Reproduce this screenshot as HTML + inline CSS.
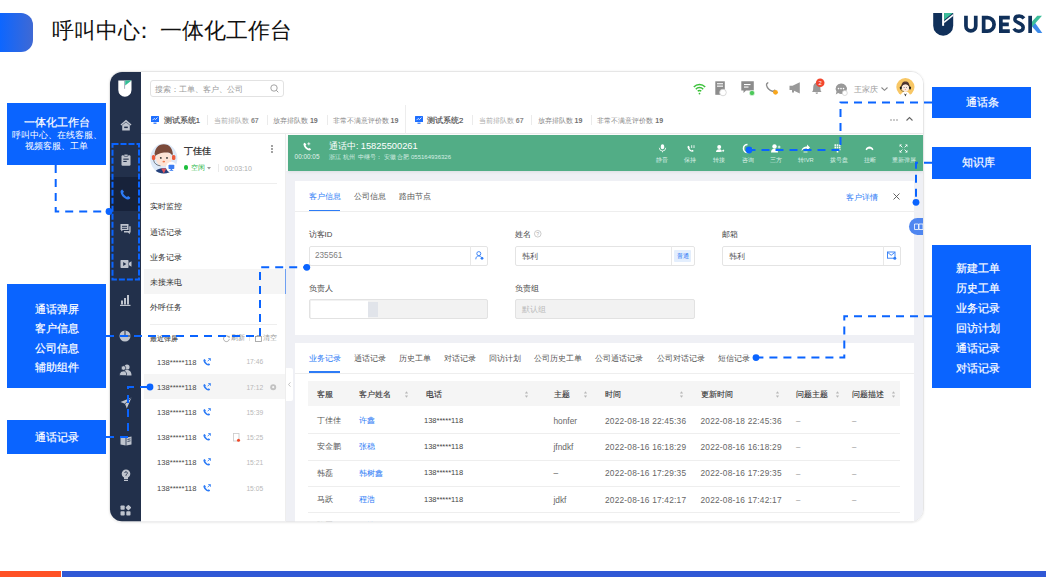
<!DOCTYPE html>
<html><head><meta charset="utf-8">
<style>
*{margin:0;padding:0;box-sizing:border-box}
html,body{width:1046px;height:577px;overflow:hidden;background:#fff;font-family:"Liberation Sans",sans-serif;color:#333}
.a{position:absolute}
.t{position:absolute;white-space:nowrap}
svg{overflow:visible}
</style></head><body>

<div class="a" style="left:0px;top:13.3px;width:33.00px;height:38.50px;border-radius:0 12px 12px 0;background:linear-gradient(90deg,#0D66FF,#3F69D4)"></div>
<div class="t" style="left:51.6px;top:19.5px;font-size:22px;line-height:22px;color:#111">呼叫中心<span style="position:relative;left:-6.5px">：</span><span style="position:relative;left:-1.2px">一体化工作台</span></div>
<svg class="a" style="left:932px;top:12px" width="22" height="25" viewBox="0 0 22 25"><path d="M1.2 1 H21.2 V13.8 A10 10 0 0 1 1.2 13.8 Z" fill="#10305A"/><rect x="10.1" y="1" width="2" height="12.8" fill="#fff"/><path d="M12.1 9.2 L21.2 1.9 V3.9 L12.1 11.2 Z" fill="#fff"/><path d="M12.1 1 H20.8 L12.1 8 Z" fill="#3DBE9A"/></svg>
<svg class="a" style="left:960px;top:10px" width="86" height="28" viewBox="0 0 86 28"><g stroke="#10305A" stroke-width="3.7" fill="none"><path d="M5.95 5.8 V16 A4.9 4.9 0 0 0 15.75 16 V5.8"/><path d="M23.65 7.65 H27.5 A6.6 6.75 0 0 1 27.5 21.15 H23.65 Z" stroke-linejoin="miter"/><path d="M49.8 7.65 H40.85 V21.15 H49.8 M40.85 14.4 H48.8" stroke-linejoin="miter"/></g><path d="M64 8.3 C62.6 6.6 60.9 5.9 59.2 5.9 C56.5 5.9 54.9 7.4 54.9 9.5 C54.9 13.2 63.2 12.6 63.2 17.4 C63.2 19.8 61.4 21.3 58.9 21.3 C56.8 21.3 55 20.4 53.8 18.6" stroke="#10305A" stroke-width="3.5" fill="none"/><rect x="68.3" y="5.8" width="3.7" height="17.2" fill="#10305A"/><path d="M72 16.5 L74.8 12.5 L82.3 23 H77.8 Z" fill="#3D8BEA"/><path d="M72 11.5 L77.3 5.8 H82 L72 17 Z" fill="#3DBE9A"/></svg>
<div class="a" style="left:0px;top:571px;width:61.00px;height:6.00px;background:#FF5226"></div>
<div class="a" style="left:62px;top:571px;width:984.00px;height:6.00px;background:#3058D5"></div>
<div class="a" style="left:109px;top:71px;width:815px;height:451.2px;border-radius:13px;border:1px solid #E6E6E6;box-shadow:0 0.5px 2px rgba(0,0,0,0.08)"></div>
<div class="a" style="left:0;top:0;width:1046px;height:577px;clip-path:inset(72px 123px 55.8px 110px round 12px)">
<div class="a" style="left:110px;top:72px;width:813.00px;height:450.00px;background:#EFF0F5"></div>
<div class="a" style="left:110px;top:72px;width:31.00px;height:450.00px;background:#22304B"></div>
<div class="a" style="left:110px;top:177px;width:31.00px;height:34.00px;background:#17223A"></div>
<div class="a" style="left:141px;top:72px;width:782.00px;height:34.00px;background:#fff;border-bottom:1px solid #EBEBEB"></div>
<div class="a" style="left:141px;top:105px;width:782.00px;height:28.50px;background:#fff;border-bottom:1px solid #EBEBEB"></div>
<div class="a" style="left:141px;top:133.5px;width:145.00px;height:388.50px;background:#fff;border-right:1px solid #EEEEEE"></div>
<div class="a" style="left:286px;top:133.5px;width:637.00px;height:37.50px;background:#fff"></div>
<div class="a" style="left:288px;top:135px;width:635.00px;height:36.00px;background:#52AD86;box-shadow:0 1px 3px rgba(0,0,0,0.08)"></div>
<div class="a" style="left:295px;top:181px;width:619.00px;height:154.30px;background:#fff"></div>
<div class="a" style="left:295px;top:343.3px;width:619.00px;height:186.70px;background:#fff"></div>
<svg class="a" style="left:118px;top:80px" width="14" height="17" viewBox="0 0 14 17"><path d="M0.3 0.5 H13.5 V10.1 A6.6 6.6 0 0 1 0.3 10.1 Z" fill="#fff"/><path d="M6.6 0.5 V8.8" stroke="#9AA3B5" stroke-width="0.9"/><path d="M7.2 0.5 H13.5 L7.2 5.5 Z" fill="#33BE96"/></svg>
<svg class="a" style="left:119.5px;top:118.5px" width="12" height="12" viewBox="0 0 12 12"><path d="M6 0.8 L11.5 5.6 L10.6 6.6 L6 2.7 L1.4 6.6 L0.5 5.6 Z" fill="#BFC4CE"/><path d="M2.2 6.3 L6 3.2 L9.8 6.3 V11.4 H2.2 Z" fill="#BFC4CE"/><rect x="4.2" y="7.6" width="3.6" height="1.5" fill="#22304B"/></svg>
<svg class="a" style="left:120.5px;top:153.5px" width="10" height="12" viewBox="0 0 10 12"><rect x="0.5" y="1.2" width="9" height="10.5" rx="1.2" fill="#BFC4CE"/><rect x="3" y="0.2" width="4" height="2.2" rx="0.8" fill="#BFC4CE" stroke="#22304B" stroke-width="0.6"/><rect x="2.3" y="4.6" width="5.4" height="1.1" fill="#22304B"/><rect x="2.3" y="6.9" width="3.4" height="1.1" fill="#22304B"/></svg>
<svg class="a" style="left:120px;top:189px" width="11" height="11" viewBox="0 0 11 11"><path d="M2.2 0.6 C1.2 1 0.4 1.9 0.6 3.2 C1.2 6.6 4.4 9.9 7.8 10.4 C9 10.6 9.9 9.8 10.4 8.8 L8.2 7 L6.9 8 C5.3 7.3 3.7 5.7 3 4.1 L4 2.8 Z" fill="#2C7BF6"/></svg>
<svg class="a" style="left:120px;top:222.5px" width="11" height="12" viewBox="0 0 11 12"><path d="M0.5 1 H8.5 V7 H3 L1.2 8.6 V7 H0.5 Z" fill="#BFC4CE"/><path d="M9.3 3.2 H10.6 V9.6 H9.8 V11.2 L8 9.6 H4 V8 H9.3 Z" fill="#BFC4CE"/><rect x="2" y="2.8" width="5" height="1" fill="#22304B"/><rect x="2" y="4.8" width="5" height="1" fill="#22304B"/></svg>
<svg class="a" style="left:119.5px;top:259px" width="12" height="10" viewBox="0 0 12 10"><rect x="0.5" y="1" width="8" height="8" rx="0.8" fill="#BFC4CE"/><path d="M9 3.8 L11.5 2.3 V7.7 L9 6.2 Z" fill="#BFC4CE"/><path d="M3.2 3 L6.3 5 L3.2 7 Z" fill="#22304B"/></svg>
<svg class="a" style="left:120px;top:293.5px" width="11" height="12" viewBox="0 0 11 12"><rect x="1" y="6.5" width="2" height="4" fill="#BFC4CE"/><rect x="4" y="4" width="2" height="6.5" fill="#BFC4CE"/><rect x="7" y="1" width="2" height="9.5" fill="#BFC4CE"/><rect x="0" y="10.8" width="10.5" height="1.2" fill="#BFC4CE"/></svg>
<svg class="a" style="left:119.2px;top:330.2px" width="12" height="12" viewBox="0 0 12 12"><circle cx="6" cy="6" r="5.5" fill="#BFC4CE"/><path d="M6 0.5 V6 H11.5" stroke="#22304B" stroke-width="1" fill="none"/></svg>
<svg class="a" style="left:118.5px;top:364.3px" width="13" height="12" viewBox="0 0 13 12"><circle cx="8" cy="3" r="2.6" fill="#BFC4CE"/><path d="M3.5 11.5 C3.5 7.5 5.5 6 8 6 C10.5 6 12.5 7.5 12.5 11.5 Z" fill="#BFC4CE"/><circle cx="4.5" cy="4" r="2.3" fill="#BFC4CE" stroke="#22304B" stroke-width="0.7"/><path d="M0.5 11.5 C0.5 8.3 2 7 4.5 7 C6 7 7 8 7.5 9 V11.5 Z" fill="#BFC4CE" stroke="#22304B" stroke-width="0.7"/></svg>
<svg class="a" style="left:119.5px;top:397px" width="12" height="12" viewBox="0 0 12 12"><path d="M11.5 0.5 L0.5 5 L5 6.8 L6.8 11.5 Z" fill="#BFC4CE"/><path d="M11.5 0.5 L5 6.8" stroke="#22304B" stroke-width="0.8"/></svg>
<svg class="a" style="left:119.5px;top:434.5px" width="12" height="11" viewBox="0 0 12 11"><path d="M0.5 1.5 L5.6 2.6 V10.5 L0.5 9.5 Z" fill="#BFC4CE"/><path d="M6.4 2.6 L11.5 1.5 V9.5 L6.4 10.5 Z" fill="#BFC4CE"/><path d="M7.5 4.5 L10.5 3.8 M7.5 6.5 L10.5 5.8" stroke="#22304B" stroke-width="0.8"/></svg>
<svg class="a" style="left:120.5px;top:469px" width="10" height="13" viewBox="0 0 10 13"><circle cx="5" cy="4.8" r="4.3" fill="#BFC4CE"/><rect x="3" y="8" width="4" height="2" fill="#BFC4CE"/><rect x="3" y="10.8" width="4" height="1.2" fill="#BFC4CE"/><path d="M3.7 4 A1.3 1.3 0 1 1 5.6 5.2 L5 6 V6.8" stroke="#22304B" stroke-width="0.9" fill="none"/></svg>
<svg class="a" style="left:120px;top:505px" width="11" height="11" viewBox="0 0 11 11"><rect x="0.5" y="0.5" width="4.2" height="4.2" rx="0.8" fill="#BFC4CE"/><rect x="6.3" y="0.5" width="4.2" height="4.2" rx="0.8" fill="#BFC4CE" transform="rotate(45 8.4 2.6)"/><rect x="0.5" y="6.3" width="4.2" height="4.2" rx="0.8" fill="#BFC4CE"/><rect x="6.3" y="6.3" width="4.2" height="4.2" rx="0.8" fill="#BFC4CE"/></svg>
<div class="a" style="left:150px;top:80px;width:134.00px;height:17.30px;border:1px solid #E2E2E2;border-radius:3px;background:#fff"></div>
<div class="t" style="left:154.5px;top:85.55px;font-size:7.9px;line-height:7.9px;color:#9A9A9A;font-weight:normal;">搜索：工单、客户、公司</div>
<svg class="a" style="left:270px;top:84px" width="9" height="9" viewBox="0 0 9 9"><circle cx="4" cy="4" r="3.2" stroke="#9A9A9A" stroke-width="0.9" fill="none"/><path d="M6.3 6.3 L8.3 8.3" stroke="#9A9A9A" stroke-width="1"/></svg>
<svg class="a" style="left:692.5px;top:82.5px" width="13" height="11.5" viewBox="0 0 13 11.5"><path d="M0.8 4 A8 8 0 0 1 12.2 4" stroke="#3CC13B" stroke-width="1.5" fill="none"/><path d="M2.8 6.2 A5 5 0 0 1 10.2 6.2" stroke="#3CC13B" stroke-width="1.5" fill="none"/><path d="M4.8 8.3 A2.3 2.3 0 0 1 8.2 8.3" stroke="#3CC13B" stroke-width="1.5" fill="none"/><circle cx="6.5" cy="10.6" r="0.9" fill="#3CC13B"/></svg>
<svg class="a" style="left:715px;top:80.8px" width="12" height="14" viewBox="0 0 12 14"><rect x="0.3" y="0.3" width="9.5" height="13.5" fill="#8C8C8C"/><rect x="2" y="2.2" width="6" height="1.1" fill="#fff"/><rect x="2" y="4.6" width="6" height="1.1" fill="#fff"/><circle cx="8" cy="11.5" r="3.3" fill="#fff" stroke="#CFCFCF" stroke-width="0.8"/></svg>
<svg class="a" style="left:741px;top:80.8px" width="14" height="14" viewBox="0 0 14 14"><path d="M0.3 0.3 H12.8 V9.5 H5 L2.5 12 V9.5 H0.3 Z" fill="#8C8C8C"/><rect x="3" y="3" width="6.5" height="1.1" fill="#fff"/><rect x="3" y="5.5" width="4.5" height="1.1" fill="#fff"/><circle cx="11" cy="12" r="2.6" fill="#4CC85A" stroke="#fff" stroke-width="0.5"/></svg>
<svg class="a" style="left:765.5px;top:82px" width="12" height="13" viewBox="0 0 12 13"><path d="M1.8 0.8 C0.8 1.3 0.3 2 0.5 3.2 C1.2 6 3.5 8.5 6.5 9.2 C7.5 9.4 8.2 9 8.7 8.2" stroke="#8C8C8C" stroke-width="1.4" fill="none" stroke-linecap="round"/><circle cx="9.5" cy="10.3" r="2.4" fill="#F8A61C"/></svg>
<svg class="a" style="left:788.5px;top:82px" width="12" height="12" viewBox="0 0 12 12"><path d="M0.5 3.8 H3.5 L10.8 0.3 V11.5 L3.5 8 H0.5 Z" fill="#999"/><rect x="3" y="8" width="2" height="2.5" fill="#999"/></svg>
<svg class="a" style="left:811px;top:80px" width="15" height="15" viewBox="0 0 15 15"><path d="M1 12 C2 11 2.2 10 2.2 7.5 C2.2 4.5 3.8 2.8 5.8 2.8 C7.8 2.8 9.4 4.5 9.4 7.5 C9.4 10 9.6 11 10.6 12 Z" fill="#999"/><path d="M4.5 12.6 A1.3 1.3 0 0 0 7.1 12.6" fill="#999"/><circle cx="9.2" cy="2.8" r="4.3" fill="#F2462E"/><text x="9.2" y="4.9" font-size="5.8" fill="#fff" text-anchor="middle" font-family="Liberation Sans">2</text></svg>
<svg class="a" style="left:835.3px;top:82.5px" width="14" height="13" viewBox="0 0 14 13"><path d="M6 0.5 A5.6 5.2 0 1 1 3.2 10 L0.8 11.5 L1.5 8.5 A5.6 5.2 0 0 1 6 0.5 Z" fill="#999"/><circle cx="3.5" cy="5.6" r="0.8" fill="#fff"/><circle cx="6" cy="5.6" r="0.8" fill="#fff"/><circle cx="8.5" cy="5.6" r="0.8" fill="#fff"/><circle cx="9.8" cy="10" r="2.5" fill="#fff" stroke="#CCC" stroke-width="0.7"/></svg>
<div class="t" style="left:854.3px;top:85.65px;font-size:7.9px;line-height:7.9px;color:#999;font-weight:normal;">王家庆</div>
<svg class="a" style="left:881px;top:86.5px" width="7" height="4" viewBox="0 0 7 4"><path d="M0.5 0.5 L3.5 3.3 L6.5 0.5" stroke="#888" stroke-width="1.1" fill="none"/></svg>
<svg class="a" style="left:895.5px;top:78.2px" width="19" height="19" viewBox="0 0 19 19"><circle cx="9.4" cy="9.1" r="9.1" fill="#F8C765"/><path d="M9.4 13.6 C6.5 13.6 4.8 15.5 4.3 19 H14.5 C14 15.5 12.3 13.6 9.4 13.6 Z" fill="#fff"/><path d="M8 15.2 L9.4 18.6 L10.8 15.2 L9.4 16.4 Z" fill="#222"/><ellipse cx="9.4" cy="9.6" rx="3.6" ry="4.1" fill="#FCEBE0"/><path d="M5.4 9.8 C5 5.3 6.8 3.4 9.4 3.4 C12.2 3.4 13.9 5.3 13.4 9.8 C12.8 7.6 11.5 6.5 9.6 6.3 C8 6.2 6.3 7.2 5.4 9.8 Z" fill="#5B3C33"/><path d="M4.9 9.8 A4.6 5.2 0 0 1 13.9 9.8" stroke="#222" stroke-width="0.5" fill="none"/><rect x="3.9" y="8.5" width="1.8" height="3" rx="0.8" fill="#1A1A1A"/><rect x="13.1" y="8.5" width="1.8" height="3" rx="0.8" fill="#1A1A1A"/><path d="M4.8 11.4 C5 12.8 6.5 13.5 8 13.4" stroke="#222" stroke-width="0.45" fill="none"/><circle cx="8.1" cy="9.5" r="0.45" fill="#333"/><circle cx="10.7" cy="9.5" r="0.45" fill="#333"/><ellipse cx="9.4" cy="11.6" rx="0.7" ry="0.4" fill="#E46A6A"/></svg>
<svg class="a" style="left:150.7px;top:115.5px" width="8" height="8" viewBox="0 0 8 8"><rect x="0" y="0" width="8" height="6" rx="0.6" fill="#1E6FFF"/><path d="M1.5 4.2 L3.2 2.5 L4.5 3.5 L6.5 1.5" stroke="#fff" stroke-width="0.8" fill="none"/><rect x="2.5" y="6.6" width="3" height="1.2" fill="#1E6FFF"/></svg>
<div class="t" style="left:163.7px;top:116.75px;font-size:7.7px;line-height:7.7px;color:#4A4A4A;font-weight:normal;-webkit-text-stroke:0.15px #4A4A4A">测试系统1</div>
<div class="a" style="left:207px;top:115px;width:1.00px;height:9.50px;background:#EBEBEB"></div>
<div class="t" style="left:214px;top:117.10px;font-size:7px;line-height:7px;color:#AAA;font-weight:normal;">当前排队数 <b style="color:#8A8A8A">67</b></div>
<div class="a" style="left:267px;top:115px;width:1.00px;height:9.50px;background:#EBEBEB"></div>
<div class="t" style="left:273px;top:117.10px;font-size:7px;line-height:7px;color:#888;font-weight:normal;">放弃排队数 <b style="color:#707070">19</b></div>
<div class="a" style="left:326.5px;top:115px;width:1.00px;height:9.50px;background:#EBEBEB"></div>
<div class="t" style="left:332.6px;top:117.10px;font-size:7px;line-height:7px;color:#888;font-weight:normal;">非常不满意评价数 <b style="color:#707070">19</b></div>
<div class="a" style="left:405px;top:105px;width:1.00px;height:28.50px;background:#EDEDED"></div>
<svg class="a" style="left:414.8px;top:115.5px" width="8" height="8" viewBox="0 0 8 8"><rect x="0" y="0" width="8" height="6" rx="0.6" fill="#1E6FFF"/><path d="M1.5 4.2 L3.2 2.5 L4.5 3.5 L6.5 1.5" stroke="#fff" stroke-width="0.8" fill="none"/><rect x="2.5" y="6.6" width="3" height="1.2" fill="#1E6FFF"/></svg>
<div class="t" style="left:427px;top:116.75px;font-size:7.7px;line-height:7.7px;color:#4A4A4A;font-weight:normal;-webkit-text-stroke:0.15px #4A4A4A">测试系统2</div>
<div class="a" style="left:472px;top:115px;width:1.00px;height:9.50px;background:#EBEBEB"></div>
<div class="t" style="left:478.9px;top:117.10px;font-size:7px;line-height:7px;color:#AAA;font-weight:normal;">当前排队数 <b style="color:#8A8A8A">67</b></div>
<div class="a" style="left:531.3px;top:115px;width:1.00px;height:9.50px;background:#EBEBEB"></div>
<div class="t" style="left:537.6px;top:117.10px;font-size:7px;line-height:7px;color:#888;font-weight:normal;">放弃排队数 <b style="color:#707070">19</b></div>
<div class="a" style="left:590.7px;top:115px;width:1.00px;height:9.50px;background:#EBEBEB"></div>
<div class="t" style="left:597.3px;top:117.10px;font-size:7px;line-height:7px;color:#888;font-weight:normal;">非常不满意评价数 <b style="color:#707070">19</b></div>
<svg class="a" style="left:889.5px;top:119px" width="8" height="2" viewBox="0 0 8 2"><circle cx="1" cy="1" r="0.8" fill="#888"/><circle cx="4" cy="1" r="0.8" fill="#888"/><circle cx="7" cy="1" r="0.8" fill="#888"/></svg>
<svg class="a" style="left:906px;top:117px" width="7" height="4" viewBox="0 0 7 4"><path d="M0.5 3.5 L3.5 0.6 L6.5 3.5" stroke="#666" stroke-width="1.1" fill="none"/></svg>
<svg class="a" style="left:145px;top:140px" width="40" height="38" viewBox="0 0 40 38"><ellipse cx="18.8" cy="18.6" rx="13.6" ry="15" fill="#DDE9F8"/><defs><clipPath id="avc"><ellipse cx="18.8" cy="18.6" rx="13.6" ry="15"/></clipPath></defs><g clip-path="url(#avc)"><path d="M8.5 36 C9.5 30.5 13 28.3 18.8 28.3 C24.5 28.3 28 30.5 29 36 Z" fill="#24407A"/><path d="M16.2 28.4 L18.8 33.5 L21.4 28.4 Z" fill="#E0525A"/></g><ellipse cx="18.8" cy="18.8" rx="7.9" ry="7.4" fill="#FDE3D5"/><path d="M9.4 17 C9.2 8.5 13 4.3 18.8 4.3 C24.6 4.3 28.2 8.5 28 17 C27 14.5 25.5 13 23 12.6 C20 12.2 17 12.6 14.8 13.5 C12 14.3 10.5 15.5 9.4 17 Z" fill="#7B4A3A"/><path d="M9.6 18 V14.5 M28 18 V14.5" stroke="#fff" stroke-width="1"/><rect x="6.9" y="15.1" width="3.4" height="4.8" rx="1.5" fill="#EC5B3C"/><rect x="27" y="15.1" width="3.4" height="4.8" rx="1.5" fill="#EC5B3C"/><path d="M8.6 20 C9 23.5 12 25.6 15.5 25.8" stroke="#333" stroke-width="0.6" fill="none"/><circle cx="15.8" cy="17.9" r="0.95" fill="#333"/><circle cx="22" cy="17.9" r="0.95" fill="#333"/><ellipse cx="18.8" cy="21.6" rx="1.3" ry="0.9" fill="#F57B4E"/><circle cx="26.4" cy="27.2" r="5.4" fill="#fff"/><rect x="23.5" y="24.7" width="5.8" height="4.3" rx="0.8" fill="#3A7CF2"/><rect x="25.6" y="29" width="1.6" height="1" fill="#3A7CF2"/><rect x="24.6" y="30" width="3.6" height="0.8" fill="#3A7CF2"/></svg>
<div class="t" style="left:184.3px;top:147.40px;font-size:8.8px;line-height:8.8px;color:#3A3A3A;font-weight:bold;">丁佳佳</div>
<div class="a" style="left:183.8px;top:165.4px;width:4.40px;height:4.40px;border-radius:50%;background:#1DBF3C"></div>
<div class="t" style="left:190.7px;top:165.00px;font-size:6.8px;line-height:6.8px;color:#2DBA4A;font-weight:normal;">空闲</div>
<svg class="a" style="left:207px;top:166.5px" width="4" height="3" viewBox="0 0 4 3"><path d="M0 0 H4 L2 2.5 Z" fill="#999"/></svg>
<div class="a" style="left:217.8px;top:164px;width:0.80px;height:7.50px;background:#EAEAEA"></div>
<div class="t" style="left:224.5px;top:164.88px;font-size:7.05px;line-height:7.05px;color:#ADADAD;font-weight:normal;">00:03:10</div>
<svg class="a" style="left:271.3px;top:144.5px" width="2" height="8" viewBox="0 0 2 8"><circle cx="1" cy="1" r="0.9" fill="#777"/><circle cx="1" cy="4" r="0.9" fill="#777"/><circle cx="1" cy="7" r="0.9" fill="#777"/></svg>
<div class="a" style="left:150px;top:183px;width:126.50px;height:1.00px;background:#EEEEEE"></div>
<div class="t" style="left:150px;top:203.30px;font-size:7.8px;line-height:7.8px;color:#333;font-weight:normal;">实时监控</div>
<div class="t" style="left:150px;top:228.50px;font-size:7.8px;line-height:7.8px;color:#333;font-weight:normal;">通话记录</div>
<div class="t" style="left:150px;top:253.50px;font-size:7.8px;line-height:7.8px;color:#333;font-weight:normal;">业务记录</div>
<div class="a" style="left:143.5px;top:269px;width:141.50px;height:25.00px;background:#F5F5F5"></div>
<div class="a" style="left:284.8px;top:269px;width:1.20px;height:25.00px;background:#6FA0F2"></div>
<div class="t" style="left:150px;top:278.70px;font-size:7.8px;line-height:7.8px;color:#333;font-weight:normal;">未接来电</div>
<div class="t" style="left:150px;top:303.90px;font-size:7.8px;line-height:7.8px;color:#333;font-weight:normal;">外呼任务</div>
<div class="a" style="left:150px;top:323.5px;width:126.50px;height:1.00px;background:#EEEEEE"></div>
<div class="t" style="left:150.4px;top:335.30px;font-size:7px;line-height:7px;color:#3A3A3A;font-weight:normal;-webkit-text-stroke:0.1px #3A3A3A">最近弹屏</div>
<svg class="a" style="left:222.5px;top:334.5px" width="7" height="7" viewBox="0 0 7 7"><path d="M5.8 2 A2.9 2.9 0 1 0 6.3 4.2" stroke="#999" stroke-width="0.8" fill="none"/><path d="M4.4 1.6 L6.3 1.2 L6.1 3.1" stroke="#999" stroke-width="0.8" fill="none"/></svg>
<div class="t" style="left:230.5px;top:335.40px;font-size:6.8px;line-height:6.8px;color:#999;font-weight:normal;">刷新</div>
<div class="a" style="left:249px;top:335px;width:0.80px;height:6.00px;background:#E5E5E5"></div>
<svg class="a" style="left:255px;top:334.5px" width="7" height="7" viewBox="0 0 7 7"><rect x="0.5" y="1.5" width="6" height="5" stroke="#999" stroke-width="0.8" fill="none"/><path d="M2 1.5 V0.5 H5 V1.5" stroke="#999" stroke-width="0.8" fill="none"/></svg>
<div class="t" style="left:263px;top:335.40px;font-size:6.8px;line-height:6.8px;color:#999;font-weight:normal;">清空</div>
<div class="t" style="left:157px;top:358.60px;font-size:7.6px;line-height:7.6px;color:#4A4A4A;font-weight:normal;">138*****118</div>
<svg class="a" style="left:203px;top:357.6px" width="8" height="8" viewBox="0 0 8 8"><path d="M1.6 0.9 C0.8 1.2 0.3 1.8 0.4 2.7 C0.9 5 3 7.1 5.3 7.6 C6.1 7.7 6.8 7.3 7.2 6.6 L5.8 5.3 L4.9 5.9 C3.8 5.4 2.8 4.4 2.3 3.3 L2.9 2.4 Z" fill="#2C7BF6"/><path d="M4.6 3.3 L7.2 0.7 M5.2 0.6 H7.4 V2.8" stroke="#2C7BF6" stroke-width="0.85" fill="none"/></svg>
<div class="t" style="left:246.4px;top:359.45px;font-size:6.7px;line-height:6.7px;color:#B8B8B8;font-weight:normal;">17:46</div>
<div class="a" style="left:143.5px;top:374.4px;width:141.50px;height:25.10px;background:#F5F5F5"></div>
<div class="t" style="left:157px;top:383.70px;font-size:7.6px;line-height:7.6px;color:#4A4A4A;font-weight:normal;">138*****118</div>
<svg class="a" style="left:203px;top:382.7px" width="8" height="8" viewBox="0 0 8 8"><path d="M1.6 0.9 C0.8 1.2 0.3 1.8 0.4 2.7 C0.9 5 3 7.1 5.3 7.6 C6.1 7.7 6.8 7.3 7.2 6.6 L5.8 5.3 L4.9 5.9 C3.8 5.4 2.8 4.4 2.3 3.3 L2.9 2.4 Z" fill="#2C7BF6"/><path d="M4.6 3.3 L7.2 0.7 M5.2 0.6 H7.4 V2.8" stroke="#2C7BF6" stroke-width="0.85" fill="none"/></svg>
<div class="t" style="left:246.4px;top:384.55px;font-size:6.7px;line-height:6.7px;color:#B8B8B8;font-weight:normal;">17:12</div>
<svg class="a" style="left:270.1px;top:383.9px" width="6.4" height="6.4" viewBox="0 0 6.4 6.4"><circle cx="3.2" cy="3.2" r="3" fill="#C2C2C2"/><circle cx="3.2" cy="3.2" r="1.1" fill="#F5F5F5"/></svg>
<div class="t" style="left:157px;top:408.90px;font-size:7.6px;line-height:7.6px;color:#4A4A4A;font-weight:normal;">138*****118</div>
<svg class="a" style="left:203px;top:407.9px" width="8" height="8" viewBox="0 0 8 8"><path d="M1.6 0.9 C0.8 1.2 0.3 1.8 0.4 2.7 C0.9 5 3 7.1 5.3 7.6 C6.1 7.7 6.8 7.3 7.2 6.6 L5.8 5.3 L4.9 5.9 C3.8 5.4 2.8 4.4 2.3 3.3 L2.9 2.4 Z" fill="#2C7BF6"/><path d="M4.6 3.3 L7.2 0.7 M5.2 0.6 H7.4 V2.8" stroke="#2C7BF6" stroke-width="0.85" fill="none"/></svg>
<div class="t" style="left:246.4px;top:409.75px;font-size:6.7px;line-height:6.7px;color:#B8B8B8;font-weight:normal;">15:39</div>
<div class="t" style="left:157px;top:434.00px;font-size:7.6px;line-height:7.6px;color:#4A4A4A;font-weight:normal;">138*****118</div>
<svg class="a" style="left:203px;top:433px" width="8" height="8" viewBox="0 0 8 8"><path d="M1.6 0.9 C0.8 1.2 0.3 1.8 0.4 2.7 C0.9 5 3 7.1 5.3 7.6 C6.1 7.7 6.8 7.3 7.2 6.6 L5.8 5.3 L4.9 5.9 C3.8 5.4 2.8 4.4 2.3 3.3 L2.9 2.4 Z" fill="#2C7BF6"/><path d="M4.6 3.3 L7.2 0.7 M5.2 0.6 H7.4 V2.8" stroke="#2C7BF6" stroke-width="0.85" fill="none"/></svg>
<div class="t" style="left:246.4px;top:434.85px;font-size:6.7px;line-height:6.7px;color:#B8B8B8;font-weight:normal;">15:25</div>
<svg class="a" style="left:233px;top:433px" width="7" height="9" viewBox="0 0 7 9"><rect x="0.5" y="0.5" width="5.5" height="7.5" stroke="#C9C9C9" stroke-width="0.8" fill="#fff"/><circle cx="5.5" cy="7.3" r="1.5" fill="#F04A2A"/></svg>
<div class="t" style="left:157px;top:459.30px;font-size:7.6px;line-height:7.6px;color:#4A4A4A;font-weight:normal;">138*****118</div>
<svg class="a" style="left:203px;top:458.3px" width="8" height="8" viewBox="0 0 8 8"><path d="M1.6 0.9 C0.8 1.2 0.3 1.8 0.4 2.7 C0.9 5 3 7.1 5.3 7.6 C6.1 7.7 6.8 7.3 7.2 6.6 L5.8 5.3 L4.9 5.9 C3.8 5.4 2.8 4.4 2.3 3.3 L2.9 2.4 Z" fill="#2C7BF6"/><path d="M4.6 3.3 L7.2 0.7 M5.2 0.6 H7.4 V2.8" stroke="#2C7BF6" stroke-width="0.85" fill="none"/></svg>
<div class="t" style="left:246.4px;top:460.15px;font-size:6.7px;line-height:6.7px;color:#B8B8B8;font-weight:normal;">15:21</div>
<div class="t" style="left:157px;top:485.00px;font-size:7.6px;line-height:7.6px;color:#4A4A4A;font-weight:normal;">138*****118</div>
<svg class="a" style="left:203px;top:484px" width="8" height="8" viewBox="0 0 8 8"><path d="M1.6 0.9 C0.8 1.2 0.3 1.8 0.4 2.7 C0.9 5 3 7.1 5.3 7.6 C6.1 7.7 6.8 7.3 7.2 6.6 L5.8 5.3 L4.9 5.9 C3.8 5.4 2.8 4.4 2.3 3.3 L2.9 2.4 Z" fill="#2C7BF6"/><path d="M4.6 3.3 L7.2 0.7 M5.2 0.6 H7.4 V2.8" stroke="#2C7BF6" stroke-width="0.85" fill="none"/></svg>
<div class="t" style="left:246.4px;top:485.85px;font-size:6.7px;line-height:6.7px;color:#B8B8B8;font-weight:normal;">15:05</div>
<div class="a" style="left:285.5px;top:368px;width:7.00px;height:33.00px;background:#fff;border-radius:0 2px 2px 0"></div>
<svg class="a" style="left:287.5px;top:382px" width="3" height="5" viewBox="0 0 3 5"><path d="M2.5 0.3 L0.5 2.5 L2.5 4.7" stroke="#AAA" stroke-width="0.7" fill="none"/></svg>
<svg class="a" style="left:303px;top:141.5px" width="9" height="9" viewBox="0 0 9 9"><path d="M1.8 0.7 C0.9 1 0.4 1.7 0.5 2.7 C1 5.4 3.4 7.9 6.1 8.4 C7 8.5 7.8 8.1 8.2 7.3 L6.6 5.9 L5.6 6.6 C4.4 6.1 3.2 4.8 2.6 3.5 L3.4 2.5 Z" fill="#fff"/><path d="M5.8 0.3 V3.3 M4.3 1.8 H7.3" stroke="#fff" stroke-width="0.8"/></svg>
<div class="t" style="left:294.6px;top:154.20px;font-size:6.4px;line-height:6.4px;color:#E3F3EC;font-weight:normal;">00:00:05</div>
<div class="t" style="left:329px;top:142.10px;font-size:8.6px;line-height:8.6px;color:#fff;font-weight:normal;">通话中:&nbsp;<span style="font-size:9.3px">15825500261</span></div>
<div class="t" style="left:329px;top:154.40px;font-size:6px;line-height:6px;color:#D8EEE4;font-weight:normal;">浙江 杭州&nbsp; 中继号：&nbsp;安徽 合肥 055164936326</div>
<svg class="a" style="left:657.8px;top:144px" width="9" height="9" viewBox="0 0 9 9"><rect x="2.8" y="0.3" width="3.4" height="5" rx="1.7" fill="#fff"/><path d="M1.3 3.8 A3.2 3.2 0 0 0 7.7 3.8" stroke="#fff" stroke-width="0.8" fill="none"/><path d="M4.5 7 V8.3" stroke="#fff" stroke-width="0.8"/></svg>
<div class="t" style="left:512.3px;width:300px;text-align:center;top:158.05px;font-size:5.7px;line-height:5.7px;color:#DCEFE6;font-weight:normal;">静音</div>
<svg class="a" style="left:685.7px;top:144px" width="9" height="9" viewBox="0 0 9 9"><path d="M2.6 1.7 C1.9 2 1.4 2.5 1.5 3.3 C1.9 5.5 3.8 7.4 6 7.8 C6.8 7.9 7.4 7.6 7.8 7 L6.5 5.8 L5.7 6.4 C4.7 6 3.7 5 3.3 4 L3.9 3.2 Z" fill="#fff"/><path d="M5.7 1.2 V4 M8 1.2 V4" stroke="#fff" stroke-width="0.85"/></svg>
<div class="t" style="left:540.2px;width:300px;text-align:center;top:158.05px;font-size:5.7px;line-height:5.7px;color:#DCEFE6;font-weight:normal;">保持</div>
<svg class="a" style="left:714.5px;top:144px" width="9" height="9" viewBox="0 0 9 9"><circle cx="4.2" cy="3" r="2" fill="#fff"/><path d="M1 8 C1 6 2.3 5.2 4.2 5.2 C5.4 5.2 6.2 5.6 6.7 6.3 L5.6 8 Z" fill="#fff"/><path d="M6 7.8 C6.3 6.6 7 6.2 8 6.2 V5.3 L9.4 6.7 L8 8.1 V7.2 C7.2 7.2 6.6 7.4 6 7.8 Z" fill="#fff"/></svg>
<div class="t" style="left:569px;width:300px;text-align:center;top:158.05px;font-size:5.7px;line-height:5.7px;color:#DCEFE6;font-weight:normal;">转接</div>
<svg class="a" style="left:743.0px;top:144px" width="9" height="9" viewBox="0 0 9 9"><path d="M4.5 0.5 A4 4 0 1 0 8.5 4.5" stroke="#fff" stroke-width="1.6" fill="none"/></svg>
<div class="t" style="left:597.5px;width:300px;text-align:center;top:158.05px;font-size:5.7px;line-height:5.7px;color:#DCEFE6;font-weight:normal;">咨询</div>
<svg class="a" style="left:771.1px;top:144px" width="9" height="9" viewBox="0 0 9 9"><circle cx="3.5" cy="2.5" r="2.2" fill="#fff"/><path d="M0 8.5 C0 5.8 1.5 4.8 3.5 4.8 C5.5 4.8 7 5.8 7 8.5 Z" fill="#fff"/><path d="M6.8 3 H9.5 M8.1 1.6 V4.4" stroke="#fff" stroke-width="0.8"/></svg>
<div class="t" style="left:625.6px;width:300px;text-align:center;top:158.05px;font-size:5.7px;line-height:5.7px;color:#DCEFE6;font-weight:normal;">三方</div>
<svg class="a" style="left:801.3px;top:144px" width="9" height="9" viewBox="0 0 9 9"><path d="M0.5 7 C1 3.5 3.5 2.5 6 2.5 V0.5 L9 3.5 L6 6.5 V4.5 C3.8 4.5 2 5 0.5 7 Z" fill="#fff"/><rect x="2.5" y="7.6" width="4" height="0.8" fill="#fff"/></svg>
<div class="t" style="left:655.8px;width:300px;text-align:center;top:158.05px;font-size:5.7px;line-height:5.7px;color:#DCEFE6;font-weight:normal;">转IVR</div>
<svg class="a" style="left:834.0px;top:144px" width="9" height="9" viewBox="0 0 9 9"><g fill="#fff"><rect x="0.5" y="0.3" width="1.6" height="1.6"/><rect x="2.7" y="0.3" width="1.6" height="1.6"/><rect x="4.9" y="0.3" width="1.6" height="1.6"/><rect x="0.5" y="2.5" width="1.6" height="1.6"/><rect x="2.7" y="2.5" width="1.6" height="1.6"/><rect x="4.9" y="2.5" width="1.6" height="1.6"/><rect x="0.5" y="4.7" width="1.6" height="1.6"/><rect x="2.7" y="4.7" width="1.6" height="1.6"/><rect x="4.9" y="4.7" width="1.6" height="1.6"/><rect x="2.7" y="6.9" width="1.6" height="1.6"/></g></svg>
<div class="t" style="left:688.5px;width:300px;text-align:center;top:158.05px;font-size:5.7px;line-height:5.7px;color:#DCEFE6;font-weight:normal;">拨号盘</div>
<svg class="a" style="left:865.2px;top:144px" width="9" height="9" viewBox="0 0 9 9"><path d="M0.5 5.5 C1.5 3.3 3 2.5 4.5 2.5 C6 2.5 7.5 3.3 8.5 5.5 L7.2 6.3 L6.2 4.9 C5.6 4.7 3.4 4.7 2.8 4.9 L1.8 6.3 Z" fill="#fff"/></svg>
<div class="t" style="left:719.7px;width:300px;text-align:center;top:158.05px;font-size:5.7px;line-height:5.7px;color:#DCEFE6;font-weight:normal;">挂断</div>
<svg class="a" style="left:899.3px;top:144px" width="9" height="9" viewBox="0 0 9 9"><path d="M1.2 1.2 L3.4 3.4 M7.8 1.2 L5.6 3.4 M1.2 7.8 L3.4 5.6 M7.8 7.8 L5.6 5.6" stroke="#fff" stroke-width="0.9"/><path d="M0.6 0.6 H3 L0.6 3 Z M8.4 0.6 H6 L8.4 3 Z M0.6 8.4 H3 L0.6 6 Z M8.4 8.4 H6 L8.4 6 Z" fill="#fff"/></svg>
<div class="t" style="left:753.8px;width:300px;text-align:center;top:158.05px;font-size:5.7px;line-height:5.7px;color:#DCEFE6;font-weight:normal;">重新弹屏</div>
<div class="t" style="left:308.5px;top:193.10px;font-size:7.8px;line-height:7.8px;color:#2E7CF6;font-weight:normal;">客户信息</div>
<div class="t" style="left:353.9px;top:193.10px;font-size:7.8px;line-height:7.8px;color:#555;font-weight:normal;">公司信息</div>
<div class="t" style="left:398.8px;top:193.10px;font-size:7.8px;line-height:7.8px;color:#555;font-weight:normal;">路由节点</div>
<div class="a" style="left:308.5px;top:209.5px;width:31.50px;height:2.00px;background:#2E7CF6"></div>
<div class="a" style="left:295px;top:211.3px;width:619.00px;height:1.00px;background:#EEEEEE"></div>
<div class="t" style="left:578px;width:300px;text-align:right;top:193.70px;font-size:7.8px;line-height:7.8px;color:#2E7CF6;font-weight:normal;">客户详情</div>
<svg class="a" style="left:892.5px;top:192.7px" width="7" height="7" viewBox="0 0 7 7"><path d="M0.5 0.5 L6.5 6.5 M6.5 0.5 L0.5 6.5" stroke="#555" stroke-width="0.9"/></svg>
<div class="t" style="left:308.5px;top:230.50px;font-size:7.8px;line-height:7.8px;color:#444;font-weight:normal;">访客ID</div>
<div class="t" style="left:515px;top:230.50px;font-size:7.8px;line-height:7.8px;color:#444;font-weight:normal;">姓名</div>
<svg class="a" style="left:534.3px;top:229.8px" width="7.5" height="7.5" viewBox="0 0 7.5 7.5"><circle cx="3.75" cy="3.75" r="3.3" stroke="#AAA" stroke-width="0.6" fill="none"/><text x="3.75" y="5.9" font-size="5.2" fill="#AAA" text-anchor="middle" font-family="Liberation Sans">?</text></svg>
<div class="t" style="left:722px;top:230.50px;font-size:7.8px;line-height:7.8px;color:#444;font-weight:normal;">邮箱</div>
<div class="a" style="left:308.5px;top:245.5px;width:179.50px;height:20.20px;border:1px solid #E4E4E4;border-radius:2px;background:#fff"></div>
<div class="a" style="left:469.7px;top:246px;width:1.00px;height:19.20px;background:#E8E8E8"></div>
<div class="a" style="left:515px;top:245.5px;width:180.00px;height:20.20px;border:1px solid #E4E4E4;border-radius:2px;background:#fff"></div>
<div class="a" style="left:671.3px;top:246px;width:1.00px;height:19.20px;background:#E8E8E8"></div>
<div class="a" style="left:722px;top:245.5px;width:178.50px;height:20.20px;border:1px solid #E4E4E4;border-radius:2px;background:#fff"></div>
<div class="a" style="left:882.5px;top:246px;width:1.00px;height:19.20px;background:#E8E8E8"></div>
<div class="t" style="left:315px;top:252.30px;font-size:8.2px;line-height:8.2px;color:#808080;font-weight:normal;">235561</div>
<div class="t" style="left:522px;top:252.50px;font-size:7.8px;line-height:7.8px;color:#555;font-weight:normal;">韩利</div>
<div class="t" style="left:729.3px;top:252.50px;font-size:7.8px;line-height:7.8px;color:#555;font-weight:normal;">韩利</div>
<svg class="a" style="left:474.5px;top:251px" width="9" height="9" viewBox="0 0 9 9"><circle cx="3.8" cy="2.6" r="2" stroke="#2E7CF6" stroke-width="0.9" fill="none"/><path d="M0.8 8.3 C0.8 6 2 5 3.8 5 C5.2 5 6 5.5 6.5 6.2" stroke="#2E7CF6" stroke-width="0.9" fill="none"/><circle cx="7" cy="7.3" r="1.4" fill="#2E7CF6"/></svg>
<div class="a" style="left:674.3px;top:249.5px;width:16.90px;height:12.00px;background:#E3EEFD;border-radius:1px"></div>
<div class="t" style="left:532.75px;width:300px;text-align:center;top:253.65px;font-size:5.5px;line-height:5.5px;color:#2E7CF6;font-weight:normal;">普通</div>
<svg class="a" style="left:887px;top:251px" width="9" height="9" viewBox="0 0 9 9"><rect x="0.5" y="1" width="7.5" height="6.2" stroke="#2E7CF6" stroke-width="0.9" fill="none"/><path d="M0.8 1.5 L4.2 4.3 L7.7 1.5" stroke="#2E7CF6" stroke-width="0.9" fill="none"/><circle cx="7.8" cy="7.2" r="1.5" fill="#2E7CF6"/></svg>
<div class="t" style="left:308.5px;top:284.70px;font-size:7.8px;line-height:7.8px;color:#444;font-weight:normal;">负责人</div>
<div class="t" style="left:515px;top:284.70px;font-size:7.8px;line-height:7.8px;color:#444;font-weight:normal;">负责组</div>
<div class="a" style="left:308.5px;top:299px;width:179.50px;height:20.00px;border:1px solid #E2E2E2;border-radius:2px;background:#F2F2F2"></div>
<div class="a" style="left:311px;top:300.5px;width:57.30px;height:17.00px;background:#fff"></div>
<div class="a" style="left:368.3px;top:301.5px;width:9.70px;height:15.00px;background:#E1E4EA"></div>
<div class="a" style="left:515px;top:299.3px;width:180.00px;height:20.00px;border:1px solid #E2E2E2;border-radius:2px;background:#F2F2F2"></div>
<div class="t" style="left:522px;top:306.20px;font-size:7.8px;line-height:7.8px;color:#BBBBBB;font-weight:normal;">默认组</div>
<div class="t" style="left:308.5px;top:354.90px;font-size:7.8px;line-height:7.8px;color:#2E7CF6;font-weight:normal;">业务记录</div>
<div class="t" style="left:353.9px;top:354.90px;font-size:7.8px;line-height:7.8px;color:#555;font-weight:normal;">通话记录</div>
<div class="t" style="left:398.8px;top:354.90px;font-size:7.8px;line-height:7.8px;color:#555;font-weight:normal;">历史工单</div>
<div class="t" style="left:444.2px;top:354.90px;font-size:7.8px;line-height:7.8px;color:#555;font-weight:normal;">对话记录</div>
<div class="t" style="left:489px;top:354.90px;font-size:7.8px;line-height:7.8px;color:#555;font-weight:normal;">回访计划</div>
<div class="t" style="left:534.4px;top:354.90px;font-size:7.8px;line-height:7.8px;color:#555;font-weight:normal;">公司历史工单</div>
<div class="t" style="left:595.3px;top:354.90px;font-size:7.8px;line-height:7.8px;color:#555;font-weight:normal;">公司通话记录</div>
<div class="t" style="left:656.6px;top:354.90px;font-size:7.8px;line-height:7.8px;color:#555;font-weight:normal;">公司对话记录</div>
<div class="t" style="left:717.6px;top:354.90px;font-size:7.8px;line-height:7.8px;color:#555;font-weight:normal;">短信记录</div>
<div class="a" style="left:308.5px;top:371.3px;width:31.50px;height:2.00px;background:#2E7CF6"></div>
<div class="a" style="left:295px;top:373px;width:619.00px;height:1.00px;background:#EEEEEE"></div>
<div class="a" style="left:308px;top:381px;width:592.00px;height:25.30px;background:#F5F5F5"></div>
<div class="t" style="left:317px;top:390.90px;font-size:7.8px;line-height:7.8px;color:#333;font-weight:normal;-webkit-text-stroke:0.12px #333">客服</div>
<div class="t" style="left:358.7px;top:390.90px;font-size:7.8px;line-height:7.8px;color:#333;font-weight:normal;-webkit-text-stroke:0.12px #333">客户姓名</div>
<svg class="a" style="left:403.5px;top:389.5px" width="5" height="9" viewBox="0 0 5 9"><path d="M0.9 3.5 L2.5 1.2 L4.1 3.5 Z" fill="#B8B8B8"/><path d="M0.9 5.5 L2.5 7.8 L4.1 5.5 Z" fill="#B8B8B8"/></svg>
<div class="t" style="left:425.5px;top:390.90px;font-size:7.8px;line-height:7.8px;color:#333;font-weight:normal;-webkit-text-stroke:0.12px #333">电话</div>
<svg class="a" style="left:523.5px;top:389.5px" width="5" height="9" viewBox="0 0 5 9"><path d="M0.9 3.5 L2.5 1.2 L4.1 3.5 Z" fill="#B8B8B8"/><path d="M0.9 5.5 L2.5 7.8 L4.1 5.5 Z" fill="#B8B8B8"/></svg>
<div class="t" style="left:553.5px;top:390.90px;font-size:7.8px;line-height:7.8px;color:#333;font-weight:normal;-webkit-text-stroke:0.12px #333">主题</div>
<svg class="a" style="left:583.0px;top:389.5px" width="5" height="9" viewBox="0 0 5 9"><path d="M0.9 3.5 L2.5 1.2 L4.1 3.5 Z" fill="#B8B8B8"/><path d="M0.9 5.5 L2.5 7.8 L4.1 5.5 Z" fill="#B8B8B8"/></svg>
<div class="t" style="left:605px;top:390.90px;font-size:7.8px;line-height:7.8px;color:#333;font-weight:normal;-webkit-text-stroke:0.12px #333">时间</div>
<svg class="a" style="left:679.2px;top:389.5px" width="5" height="9" viewBox="0 0 5 9"><path d="M0.9 3.5 L2.5 1.2 L4.1 3.5 Z" fill="#B8B8B8"/><path d="M0.9 5.5 L2.5 7.8 L4.1 5.5 Z" fill="#B8B8B8"/></svg>
<div class="t" style="left:700.5px;top:390.90px;font-size:7.8px;line-height:7.8px;color:#333;font-weight:normal;-webkit-text-stroke:0.12px #333">更新时间</div>
<svg class="a" style="left:774.5px;top:389.5px" width="5" height="9" viewBox="0 0 5 9"><path d="M0.9 3.5 L2.5 1.2 L4.1 3.5 Z" fill="#B8B8B8"/><path d="M0.9 5.5 L2.5 7.8 L4.1 5.5 Z" fill="#B8B8B8"/></svg>
<div class="t" style="left:796px;top:390.90px;font-size:7.8px;line-height:7.8px;color:#333;font-weight:normal;-webkit-text-stroke:0.12px #333">问题主题</div>
<svg class="a" style="left:834.5px;top:389.5px" width="5" height="9" viewBox="0 0 5 9"><path d="M0.9 3.5 L2.5 1.2 L4.1 3.5 Z" fill="#B8B8B8"/><path d="M0.9 5.5 L2.5 7.8 L4.1 5.5 Z" fill="#B8B8B8"/></svg>
<div class="t" style="left:852px;top:390.90px;font-size:7.8px;line-height:7.8px;color:#333;font-weight:normal;-webkit-text-stroke:0.12px #333">问题描述</div>
<svg class="a" style="left:890.5px;top:389.5px" width="5" height="9" viewBox="0 0 5 9"><path d="M0.9 3.5 L2.5 1.2 L4.1 3.5 Z" fill="#B8B8B8"/><path d="M0.9 5.5 L2.5 7.8 L4.1 5.5 Z" fill="#B8B8B8"/></svg>
<div class="t" style="left:317px;top:416.90px;font-size:7.8px;line-height:7.8px;color:#555;font-weight:normal;">丁佳佳</div>
<div class="t" style="left:358.7px;top:416.90px;font-size:7.8px;line-height:7.8px;color:#2E7CF6;font-weight:normal;">许鑫</div>
<div class="t" style="left:424px;top:416.75px;font-size:7.5px;line-height:7.5px;color:#444;font-weight:normal;">138*****118</div>
<div class="t" style="left:553.5px;top:416.65px;font-size:8.3px;line-height:8.3px;color:#666;font-weight:normal;">honfer</div>
<div class="t" style="left:605px;top:416.65px;font-size:8.3px;line-height:8.3px;color:#666;font-weight:normal;letter-spacing:0.22px">2022-08-18 22:45:36</div>
<div class="t" style="left:700.5px;top:416.65px;font-size:8.3px;line-height:8.3px;color:#666;font-weight:normal;letter-spacing:0.22px">2022-08-18 22:45:36</div>
<div class="t" style="left:796px;top:416.90px;font-size:7.8px;line-height:7.8px;color:#888;font-weight:normal;">–</div>
<div class="t" style="left:852px;top:416.90px;font-size:7.8px;line-height:7.8px;color:#888;font-weight:normal;">–</div>
<div class="a" style="left:308px;top:433.2px;width:592.00px;height:1.00px;background:#EEEEEE"></div>
<div class="t" style="left:317px;top:443.25px;font-size:7.8px;line-height:7.8px;color:#555;font-weight:normal;">安金鹏</div>
<div class="t" style="left:358.7px;top:443.25px;font-size:7.8px;line-height:7.8px;color:#2E7CF6;font-weight:normal;">张稳</div>
<div class="t" style="left:424px;top:443.10px;font-size:7.5px;line-height:7.5px;color:#444;font-weight:normal;">138*****118</div>
<div class="t" style="left:553.5px;top:443.00px;font-size:8.3px;line-height:8.3px;color:#666;font-weight:normal;">jfndkf</div>
<div class="t" style="left:605px;top:443.00px;font-size:8.3px;line-height:8.3px;color:#666;font-weight:normal;letter-spacing:0.22px">2022-08-16 16:18:29</div>
<div class="t" style="left:700.5px;top:443.00px;font-size:8.3px;line-height:8.3px;color:#666;font-weight:normal;letter-spacing:0.22px">2022-08-16 16:18:29</div>
<div class="t" style="left:796px;top:443.25px;font-size:7.8px;line-height:7.8px;color:#888;font-weight:normal;">–</div>
<div class="t" style="left:852px;top:443.25px;font-size:7.8px;line-height:7.8px;color:#888;font-weight:normal;">–</div>
<div class="a" style="left:308px;top:459.55px;width:592.00px;height:1.00px;background:#EEEEEE"></div>
<div class="t" style="left:317px;top:469.60px;font-size:7.8px;line-height:7.8px;color:#555;font-weight:normal;">韩磊</div>
<div class="t" style="left:358.7px;top:469.60px;font-size:7.8px;line-height:7.8px;color:#2E7CF6;font-weight:normal;">韩树鑫</div>
<div class="t" style="left:424px;top:469.45px;font-size:7.5px;line-height:7.5px;color:#444;font-weight:normal;">138*****118</div>
<div class="t" style="left:553.5px;top:469.35px;font-size:8.3px;line-height:8.3px;color:#666;font-weight:normal;">–</div>
<div class="t" style="left:605px;top:469.35px;font-size:8.3px;line-height:8.3px;color:#666;font-weight:normal;letter-spacing:0.22px">2022-08-16 17:29:35</div>
<div class="t" style="left:700.5px;top:469.35px;font-size:8.3px;line-height:8.3px;color:#666;font-weight:normal;letter-spacing:0.22px">2022-08-16 17:29:35</div>
<div class="t" style="left:796px;top:469.60px;font-size:7.8px;line-height:7.8px;color:#888;font-weight:normal;">–</div>
<div class="t" style="left:852px;top:469.60px;font-size:7.8px;line-height:7.8px;color:#888;font-weight:normal;">–</div>
<div class="a" style="left:308px;top:485.9px;width:592.00px;height:1.00px;background:#EEEEEE"></div>
<div class="t" style="left:317px;top:495.95px;font-size:7.8px;line-height:7.8px;color:#555;font-weight:normal;">马跃</div>
<div class="t" style="left:358.7px;top:495.95px;font-size:7.8px;line-height:7.8px;color:#2E7CF6;font-weight:normal;">程浩</div>
<div class="t" style="left:424px;top:495.80px;font-size:7.5px;line-height:7.5px;color:#444;font-weight:normal;">138*****118</div>
<div class="t" style="left:553.5px;top:495.70px;font-size:8.3px;line-height:8.3px;color:#666;font-weight:normal;">jdkf</div>
<div class="t" style="left:605px;top:495.70px;font-size:8.3px;line-height:8.3px;color:#666;font-weight:normal;letter-spacing:0.22px">2022-08-16 17:42:17</div>
<div class="t" style="left:700.5px;top:495.70px;font-size:8.3px;line-height:8.3px;color:#666;font-weight:normal;letter-spacing:0.22px">2022-08-16 17:42:17</div>
<div class="t" style="left:796px;top:495.95px;font-size:7.8px;line-height:7.8px;color:#888;font-weight:normal;">–</div>
<div class="t" style="left:852px;top:495.95px;font-size:7.8px;line-height:7.8px;color:#888;font-weight:normal;">–</div>
<div class="a" style="left:308px;top:512.25px;width:592.00px;height:1.00px;background:#EEEEEE"></div>
<div class="t" style="left:317px;top:522.30px;font-size:7.8px;line-height:7.8px;color:#555;font-weight:normal;">陈磊</div>
<div class="t" style="left:358.7px;top:522.30px;font-size:7.8px;line-height:7.8px;color:#2E7CF6;font-weight:normal;">王浩</div>
<div class="t" style="left:424px;top:522.15px;font-size:7.5px;line-height:7.5px;color:#444;font-weight:normal;">138*****118</div>
<div class="t" style="left:553.5px;top:522.05px;font-size:8.3px;line-height:8.3px;color:#666;font-weight:normal;">kdf</div>
<div class="t" style="left:605px;top:522.05px;font-size:8.3px;line-height:8.3px;color:#666;font-weight:normal;letter-spacing:0.22px">2022-08-16 17:42:17</div>
<div class="t" style="left:700.5px;top:522.05px;font-size:8.3px;line-height:8.3px;color:#666;font-weight:normal;letter-spacing:0.22px">2022-08-16 17:42:17</div>
<div class="t" style="left:796px;top:522.30px;font-size:7.8px;line-height:7.8px;color:#888;font-weight:normal;">–</div>
<div class="t" style="left:852px;top:522.30px;font-size:7.8px;line-height:7.8px;color:#888;font-weight:normal;">–</div>
<div class="a" style="left:308px;top:538.6px;width:592.00px;height:1.00px;background:#EEEEEE"></div>
<svg class="a" style="left:908.5px;top:218px" width="15" height="17" viewBox="0 0 15 17"><path d="M8.5 0 H15 V17 H8.5 A8.5 8.5 0 0 1 8.5 0 Z" fill="#4F86F0"/><path d="M5.5 6 H9.5 V11.5 H5.5 Z M10 6 H14 V11.5 H10 Z" stroke="#fff" stroke-width="0.8" fill="none"/></svg>
</div>
<div class="a" style="left:7px;top:103px;width:99px;height:62px;background:#0A64FF"></div>

<div class="t" style="left:-93.5px;width:300px;text-align:center;top:117.10px;font-size:11px;line-height:11px;color:#fff;font-weight:normal;-webkit-text-stroke:0.2px #fff">一体化工作台</div>
<div class="t" style="left:-93.5px;width:300px;text-align:center;top:131.30px;font-size:8.6px;line-height:8.6px;color:#fff;font-weight:normal;">呼叫中心、在线客服、</div>
<div class="t" style="left:-93.5px;width:300px;text-align:center;top:141.62px;font-size:8.75px;line-height:8.75px;color:#fff;font-weight:normal;">视频客服、工单</div>
<div class="a" style="left:7px;top:284px;width:99px;height:104px;background:#0A64FF"></div>

<div class="t" style="left:-93.5px;width:300px;text-align:center;top:303.50px;font-size:11px;line-height:11px;color:#fff;font-weight:normal;-webkit-text-stroke:0.2px #fff">通话弹屏</div>
<div class="t" style="left:-93.5px;width:300px;text-align:center;top:323.00px;font-size:11px;line-height:11px;color:#fff;font-weight:normal;-webkit-text-stroke:0.2px #fff">客户信息</div>
<div class="t" style="left:-93.5px;width:300px;text-align:center;top:342.50px;font-size:11px;line-height:11px;color:#fff;font-weight:normal;-webkit-text-stroke:0.2px #fff">公司信息</div>
<div class="t" style="left:-93.5px;width:300px;text-align:center;top:362.00px;font-size:11px;line-height:11px;color:#fff;font-weight:normal;-webkit-text-stroke:0.2px #fff">辅助组件</div>
<div class="a" style="left:7px;top:420px;width:99px;height:34px;background:#0A64FF"></div>

<div class="t" style="left:-93.5px;width:300px;text-align:center;top:431.50px;font-size:11px;line-height:11px;color:#fff;font-weight:normal;-webkit-text-stroke:0.2px #fff">通话记录</div>
<div class="a" style="left:932px;top:87px;width:99px;height:31px;background:#0A64FF"></div>

<div class="t" style="left:832px;width:300px;text-align:center;top:97.10px;font-size:11px;line-height:11px;color:#fff;font-weight:normal;-webkit-text-stroke:0.2px #fff">通话条</div>
<div class="a" style="left:932px;top:147px;width:99px;height:32px;background:#0A64FF"></div>

<div class="t" style="left:828px;width:300px;text-align:center;top:157.30px;font-size:11px;line-height:11px;color:#fff;font-weight:normal;-webkit-text-stroke:0.2px #fff">知识库</div>
<div class="a" style="left:932px;top:245px;width:99px;height:143px;background:#0A64FF"></div>

<div class="t" style="left:828px;width:300px;text-align:center;top:263.10px;font-size:11px;line-height:11px;color:#fff;font-weight:normal;-webkit-text-stroke:0.2px #fff">新建工单</div>
<div class="t" style="left:828px;width:300px;text-align:center;top:283.00px;font-size:11px;line-height:11px;color:#fff;font-weight:normal;-webkit-text-stroke:0.2px #fff">历史工单</div>
<div class="t" style="left:828px;width:300px;text-align:center;top:302.90px;font-size:11px;line-height:11px;color:#fff;font-weight:normal;-webkit-text-stroke:0.2px #fff">业务记录</div>
<div class="t" style="left:828px;width:300px;text-align:center;top:322.80px;font-size:11px;line-height:11px;color:#fff;font-weight:normal;-webkit-text-stroke:0.2px #fff">回访计划</div>
<div class="t" style="left:828px;width:300px;text-align:center;top:342.70px;font-size:11px;line-height:11px;color:#fff;font-weight:normal;-webkit-text-stroke:0.2px #fff">通话记录</div>
<div class="t" style="left:828px;width:300px;text-align:center;top:362.60px;font-size:11px;line-height:11px;color:#fff;font-weight:normal;-webkit-text-stroke:0.2px #fff">对话记录</div>
<svg class="a" style="left:0;top:0" width="1046" height="577"><path d="M55.7 165 V211.5 H108" stroke="#0A64FF" stroke-width="2" fill="none" stroke-dasharray="8 6"/><circle cx="109" cy="211.5" r="3.4" fill="#0A64FF"/><path d="M112.5 144 H139 V279.4 H112.5 Z" stroke="#0A64FF" stroke-width="2" fill="none" stroke-dasharray="6 2"/><path d="M106 336 H260" stroke="#0A64FF" stroke-width="2" fill="none" stroke-dasharray="8 6"/><path d="M260 336 V267.2 H306" stroke="#0A64FF" stroke-width="2" fill="none" stroke-dasharray="8 6"/><circle cx="306.8" cy="267.3" r="3.4" fill="#0A64FF"/><path d="M106 437 H128 V387 H149" stroke="#0A64FF" stroke-width="2" fill="none" stroke-dasharray="8 6"/><circle cx="150" cy="387" r="3.4" fill="#0A64FF"/><path d="M932 102.5 H840.5 V150 H749" stroke="#0A64FF" stroke-width="2" fill="none" stroke-dasharray="8 6"/><circle cx="749" cy="150" r="3.4" fill="#0A64FF"/><path d="M932 162.8 H916 V202" stroke="#0A64FF" stroke-width="2" fill="none" stroke-dasharray="8 6"/><circle cx="916" cy="202.3" r="3.4" fill="#0A64FF"/><path d="M932 316.2 H844.3 V357.6 H756" stroke="#0A64FF" stroke-width="2" fill="none" stroke-dasharray="8 6"/><circle cx="756" cy="357.6" r="3.4" fill="#0A64FF"/></svg>
</body></html>
